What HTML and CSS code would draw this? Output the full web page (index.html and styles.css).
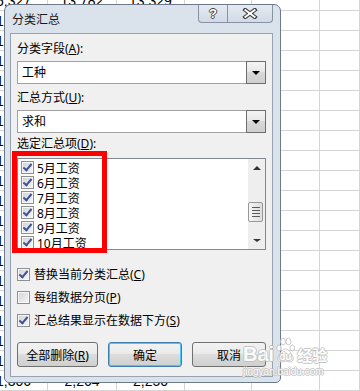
FILE: index.html
```html
<!DOCTYPE html>
<html lang="zh-CN">
<head>
  <meta charset="UTF-8">
  <title>分类汇总</title>
  <link rel="stylesheet" href="styles.css">
</head>
<body>

<div class="sheet">
  <div class="row"><span>5,327</span><span>13,782</span><span>13,329</span><span></span><span></span><span></span></div>
  <div class="row"><span>1,306</span><span></span><span></span><span></span><span></span><span></span></div>
  <div class="row"><span>1,458</span><span></span><span></span><span></span><span></span><span></span></div>
  <div class="row"><span>1,280</span><span></span><span></span><span></span><span></span><span></span></div>
  <div class="row"><span>1,362</span><span></span><span></span><span></span><span></span><span></span></div>
  <div class="row"><span>1,415</span><span></span><span></span><span></span><span></span><span></span></div>
  <div class="row"><span>1,337</span><span></span><span></span><span></span><span></span><span></span></div>
  <div class="row"><span>1,294</span><span></span><span></span><span></span><span></span><span></span></div>
  <div class="row"><span>1,371</span><span></span><span></span><span></span><span></span><span></span></div>
  <div class="row"><span>1,402</span><span></span><span></span><span></span><span></span><span></span></div>
  <div class="row"><span>1,318</span><span></span><span></span><span></span><span></span><span></span></div>
  <div class="row"><span>1,386</span><span></span><span></span><span></span><span></span><span></span></div>
  <div class="row"><span>1,341</span><span></span><span></span><span></span><span></span><span></span></div>
  <div class="row"><span>1,299</span><span></span><span></span><span></span><span></span><span></span></div>
  <div class="row"><span>1,425</span><span></span><span></span><span></span><span></span><span></span></div>
  <div class="row"><span>1,353</span><span></span><span></span><span></span><span></span><span></span></div>
  <div class="row"><span>1,310</span><span></span><span></span><span></span><span></span><span></span></div>
  <div class="row"><span>1,394</span><span></span><span></span><span></span><span></span><span></span></div>
  <div class="row"><span>1,367</span><span></span><span></span><span></span><span></span><span></span></div>
  <div class="row"><span>1,306</span><span>2,264</span><span>2,250</span><span></span><span></span><span></span></div>
</div>

<div class="dialog">
  <div class="titlebar">
    <span class="title">分类汇总</span>
    <div class="caps">
      <span class="cap help">?</span>
      <span class="cap close">
        <svg width="16" height="11" viewBox="0 0 16 11">
          <path d="M1.6 0.7 L14.4 10.3 M14.4 0.7 L1.6 10.3" stroke="#3b3b3b" stroke-width="4"/>
          <path d="M2.6 1.5 L13.4 9.5 M13.4 1.5 L2.6 9.5" stroke="#fff" stroke-width="2"/>
        </svg>
      </span>
    </div>
  </div>

  <div class="client">
    <div class="lbl">分类字段(<u>A</u>):</div>
    <div class="combo">
      <span class="combo-text">工种</span>
      <span class="drop"><i class="tri-down"></i></span>
    </div>

    <div class="lbl lbl-2">汇总方式(<u>U</u>):</div>
    <div class="combo">
      <span class="combo-text">求和</span>
      <span class="drop"><i class="tri-down"></i></span>
    </div>

    <div class="lbl lbl-3">选定汇总项(<u>D</u>):</div>
    <div class="list">
      <div class="items">
        <div class="item"><span class="chk on"></span><span>5月工资</span></div>
        <div class="item"><span class="chk on"></span><span>6月工资</span></div>
        <div class="item"><span class="chk on"></span><span>7月工资</span></div>
        <div class="item"><span class="chk on"></span><span>8月工资</span></div>
        <div class="item"><span class="chk on"></span><span>9月工资</span></div>
        <div class="item"><span class="chk on"></span><span>10月工资</span></div>
      </div>
      <div class="scroll">
        <span class="sb-btn"><i class="tri-up"></i></span>
        <span class="thumb"><i></i><i></i><i></i><i></i></span>
        <span class="sb-fill"></span>
        <span class="sb-btn"><i class="tri-down small"></i></span>
      </div>
    </div>

    <div class="opt opt-first"><span class="chk on"></span><span>替换当前分类汇总(<u>C</u>)</span></div>
    <div class="opt"><span class="chk"></span><span>每组数据分页(<u>P</u>)</span></div>
    <div class="opt"><span class="chk on"></span><span>汇总结果显示在数据下方(<u>S</u>)</span></div>

    <div class="btns">
      <span class="btn btn-del"><span>全部删除(<u>R</u>)</span></span>
      <span class="btn btn-ok">确定</span>
      <span class="btn btn-cancel">取消</span>
    </div>
  </div>

  <div class="highlight"></div>
</div>

<div class="watermark">
  <div class="wm-top">
    <span class="wm-bai">Bai</span>
    <span class="wm-paw">
      <svg width="19" height="26" viewBox="0 0 19 26">
        <ellipse cx="3" cy="11" rx="2.3" ry="3" fill="#fff" stroke="#c2c2c2"/>
        <ellipse cx="7" cy="4.5" rx="2.4" ry="3.4" fill="#fff" stroke="#c2c2c2"/>
        <ellipse cx="12.5" cy="4.5" rx="2.4" ry="3.4" fill="#fff" stroke="#c2c2c2"/>
        <ellipse cx="16.3" cy="11" rx="2.3" ry="3" fill="#fff" stroke="#c2c2c2"/>
        <path d="M9.5 12 C6 12 4.5 16 2.5 19 C1 21.5 2 25 5 25 C7 25 8 24.3 9.5 24.3 C11 24.3 12 25 14 25 C17 25 18 21.5 16.5 19 C14.5 16 13 12 9.5 12 Z" fill="#fff" stroke="#c2c2c2"/>
      </svg>
      <span class="wm-du">du</span>
    </span>
    <span class="wm-jy">经验</span>
  </div>
  <div class="wm-url">jingyan.baidu.com</div>
</div>

</body>
</html>
```

FILE: styles.css
```css
body {
  margin: 0;
  width: 360px;
  height: 391px;
  overflow: hidden;
  position: relative;
  background: #fff;
  font-family: "Noto Sans", "Noto Sans CJK SC", sans-serif;
  font-size: 12px;
  color: #000;
}

/* spreadsheet behind the dialog */
.sheet {
  margin: -9px 0 0 -20px;
  font-family: "Liberation Sans", Arial, sans-serif;
  font-size: 14px;
}
.sheet .row {
  display: grid;
  grid-template-columns: 68px 69px 68px 67px 68px 40px;
  height: 20px;
}
.sheet .row span {
  box-sizing: border-box;
  border-right: 1px solid #d4d4d4;
  border-bottom: 1px solid #d4d4d4;
  display: flex;
  align-items: flex-end;
  justify-content: center;
  line-height: 16px;
  padding-bottom: 1px;
}

/* dialog window */
.dialog {
  position: absolute;
  left: 4px;
  top: 4px;
  width: 277px;
  height: 379px;
  box-sizing: border-box;
  border: 1px solid #6d7989;
  border-radius: 7px 7px 5px 5px;
  background: #dae2ec;
  padding: 0 7px 5px 5px;
  display: flex;
  flex-direction: column;
}
.titlebar {
  height: 28px;
  flex: none;
  display: flex;
  justify-content: space-between;
  align-items: flex-start;
}
.title {
  padding: 7px 0 0 2px;
  line-height: 16px;
  color: #1a1a1a;
}
.caps { display: flex; }
.cap {
  height: 18px;
  box-sizing: border-box;
  border: 1px solid #8793a3;
  border-top: none;
  background: linear-gradient(#e4eaf2, #d1dae6);
  display: flex;
  align-items: center;
  justify-content: center;
}
.help {
  width: 30px;
  border-radius: 0 0 0 4px;
  font-family: "Liberation Sans", Arial, sans-serif;
  font-weight: bold;
  font-size: 13px;
  color: #fff;
  text-shadow: 1px 0 #444, -1px 0 #444, 0 1px #444, 0 -1px #444;
}
.close {
  width: 45px;
  border-left: none;
  border-radius: 0 0 4px 0;
}

.client {
  flex: 1;
  background: #f0f0f0;
  border: 1px solid #98a3b1;
  padding: 8px 6px 0;
  display: flex;
  flex-direction: column;
}
.lbl {
  height: 14px;
  line-height: 14px;
}
.lbl-2 { margin-top: 7px; }
.lbl-3 { margin-top: 4px; }

.combo {
  margin-top: 5px;
  height: 23px;
  box-sizing: border-box;
  border: 1px solid #a2a2a2;
  background: #fff;
  display: flex;
}
.combo-text {
  flex: 1;
  padding-left: 4px;
  line-height: 21px;
}
.drop {
  width: 18px;
  margin: -1px -1px -1px 0;
  border: 1px solid #6f6f6f;
  background: linear-gradient(#f4f4f4, #e6e6e6 50%, #d8d8d8 50%, #cfcfcf);
  display: flex;
  align-items: center;
  justify-content: center;
}
.tri-down {
  width: 0;
  height: 0;
  border-left: 4px solid transparent;
  border-right: 4px solid transparent;
  border-top: 4px solid #000;
}
.tri-down.small { border-top: 3px solid #333; }
.tri-up {
  width: 0;
  height: 0;
  border-left: 4px solid transparent;
  border-right: 4px solid transparent;
  border-bottom: 4px solid #333;
}

.list {
  margin-top: 7px;
  height: 92px;
  box-sizing: border-box;
  border: 1px solid #828790;
  background: #fff;
  display: flex;
}
.items {
  flex: 1;
  padding: 1px 0 0 3px;
}
.item {
  height: 15px;
  display: flex;
  align-items: center;
  gap: 3px;
}
.scroll {
  width: 17px;
  background: #eeeeee;
  display: flex;
  flex-direction: column;
}
.sb-btn {
  height: 17px;
  display: flex;
  align-items: center;
  justify-content: center;
}
.sb-fill { flex: 1; }
.thumb {
  margin-top: 26px;
  height: 20px;
  width: 15px;
  box-sizing: border-box;
  border: 1px solid #979797;
  border-radius: 2px;
  background: linear-gradient(90deg, #f4f4f4, #dedede);
  display: flex;
  flex-direction: column;
  align-items: center;
  justify-content: center;
  gap: 2px;
}
.thumb i {
  width: 8px;
  height: 1px;
  background: #5a5a5a;
}

.chk {
  position: relative;
  width: 13px;
  height: 13px;
  flex: none;
  box-sizing: border-box;
  border: 1px solid #8e8f8f;
  background: linear-gradient(135deg, #cfd2d6, #f6f6f6);
  box-shadow: inset 0 0 0 1px #f7f7f7;
}
.chk.on::after {
  content: "";
  position: absolute;
  left: 3px;
  top: 0;
  width: 3px;
  height: 7px;
  border: solid #3f5394;
  border-width: 0 2px 2px 0;
  transform: rotate(40deg);
}

.opt {
  height: 16px;
  margin-top: 7px;
  display: flex;
  align-items: center;
  gap: 4px;
}
.opt-first { margin-top: 16px; }

.btns {
  margin-top: 14px;
  display: flex;
  gap: 10px;
}
.btn {
  height: 25px;
  box-sizing: border-box;
  border: 1px solid #707070;
  border-radius: 3px;
  background: linear-gradient(#f2f2f2, #ebebeb 45%, #dddddd 50%, #cfcfcf);
  display: flex;
  align-items: center;
  justify-content: center;
}
.btn-del { width: 81px; }
.btn-ok {
  width: 74px;
  border-color: #3c7fb1;
  box-shadow: inset 0 0 0 1px #48c6f5;
}
.btn-cancel { width: 74px; }

/* red box drawn over the screenshot */
.highlight {
  position: absolute;
  left: 7px;
  top: 146px;
  width: 95px;
  height: 102px;
  box-sizing: border-box;
  border: 5px solid #ff0000;
}

/* baidu watermark */
.watermark {
  position: absolute;
  left: 243px;
  top: 337px;
  opacity: 0.85;
  color: #fff;
  font-family: "Liberation Sans", Arial, sans-serif;
  font-weight: bold;
  text-shadow: 1px 0 #bdbdbd, -1px 0 #bdbdbd, 0 1px #bdbdbd, 0 -1px #bdbdbd;
}
.wm-top {
  height: 26px;
  display: flex;
  align-items: flex-end;
  gap: 2px;
}
.wm-bai {
  font-size: 20px;
  line-height: 18px;
}
.wm-paw {
  position: relative;
  height: 26px;
}
.wm-du {
  position: absolute;
  left: 3px;
  top: 14px;
  font-size: 10px;
  line-height: 11px;
}
.wm-jy {
  font-family: "Noto Sans CJK SC", sans-serif;
  font-size: 15px;
  line-height: 16px;
}
.wm-url {
  margin-top: 3px;
  font-size: 10px;
  line-height: 12px;
  font-weight: normal;
}
```
